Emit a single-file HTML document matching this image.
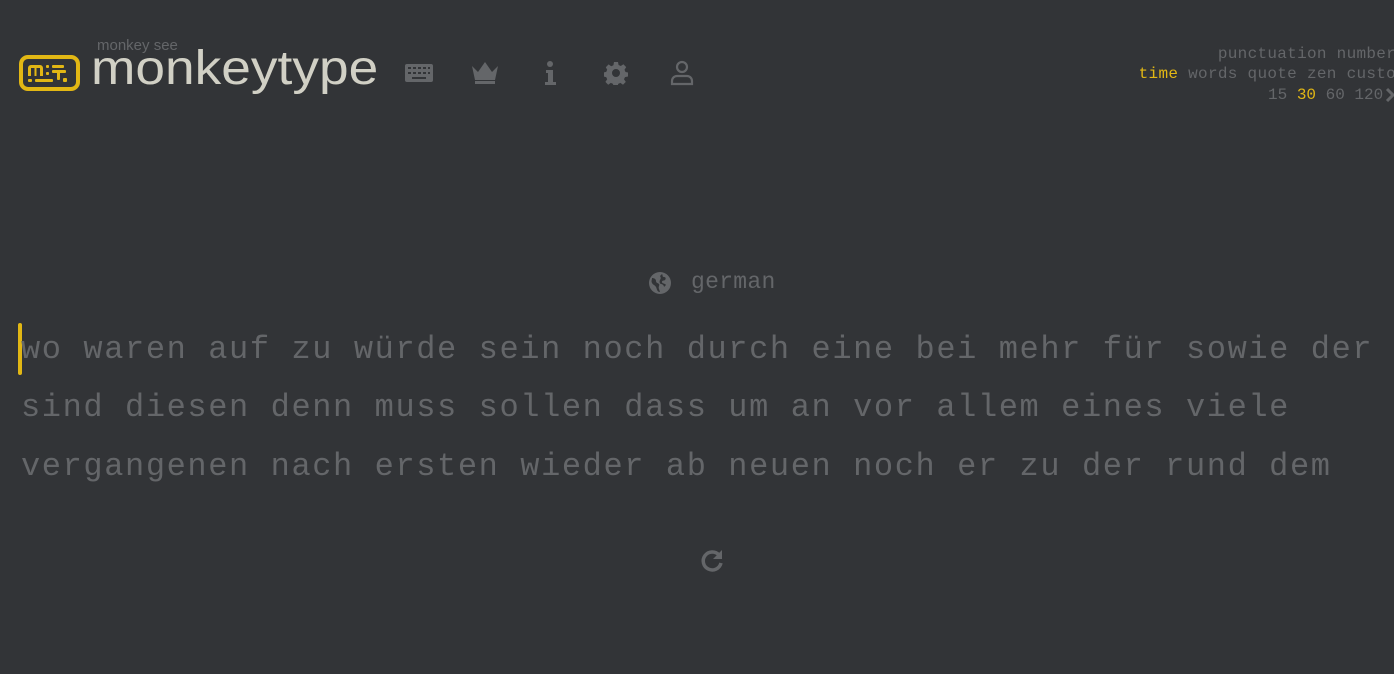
<!DOCTYPE html>
<html><head><meta charset="utf-8"><style>
html,body{margin:0;padding:0;background:#323437;width:1394px;height:674px;overflow:hidden;position:relative}
.mono{font-family:"Liberation Mono",monospace}
.abs{position:absolute;white-space:nowrap}
.words{left:21px;font-size:32px;letter-spacing:1.6px;color:#646669;line-height:58px}
.tr{right:-12px;font-size:16px;color:#646669;text-align:right;line-height:20px;letter-spacing:0.3px}
.y{color:#e2b714}
</style></head><body>
<svg class="abs" style="left:19px;top:55px" width="61" height="36" viewBox="0 0 61 36">
<rect x="2" y="2" width="57" height="32" rx="7" fill="none" stroke="#e2b714" stroke-width="4"/>
<g fill="#e2b714">
<path d="M9 21V13a3 3 0 0 1 3-3h9a3 3 0 0 1 3 3v8h-3v-8h-3.5v8h-2v-8H12v8z"/>
<rect x="27" y="10" width="3" height="3" rx="1"/><rect x="27" y="17" width="3" height="3" rx="1"/>
<rect x="33" y="10" width="12" height="3" rx="1"/><rect x="33" y="15" width="14" height="3" rx="1"/>
<rect x="38" y="15" width="3" height="10" rx="1"/>
<rect x="9" y="24" width="4" height="3" rx="1"/><rect x="16" y="24" width="18" height="3" rx="1"/>
<rect x="44" y="23" width="4" height="4" rx="1"/>
</g></svg>
<div class="abs" style="left:97px;top:37px;font-family:'Liberation Sans',sans-serif;font-size:15px;color:#646669">monkey see</div>
<div class="abs" style="left:91px;top:41px;font-family:'Liberation Sans',sans-serif;font-size:48px;color:#d1d0c5;transform-origin:0 0;transform:scaleX(1.11)">monkeytype</div>
<svg class="abs" style="left:405px;top:62px" width="28" height="22" viewBox="0 0 28 22"><rect x="0" y="2" width="28" height="18" rx="2" fill="#646669"/><g fill="#323437"><rect x="3" y="5" width="3" height="2"/><rect x="8" y="5" width="3" height="2"/><rect x="13" y="5" width="3" height="2"/><rect x="18" y="5" width="3" height="2"/><rect x="23" y="5" width="2" height="2"/><rect x="3" y="10" width="3" height="2"/><rect x="8" y="10" width="3" height="2"/><rect x="13" y="10" width="3" height="2"/><rect x="18" y="10" width="3" height="2"/><rect x="23" y="10" width="2" height="2"/><rect x="7" y="15" width="14" height="2"/></g></svg>
<svg class="abs" style="left:470px;top:60px" width="30" height="26" viewBox="0 0 30 26"><path d="M2 6l6 6 7-10 7 10 6-6-3 14H5z" fill="#646669"/><rect x="5" y="21" width="20" height="3" fill="#646669"/></svg>
<svg class="abs" style="left:543px;top:60px" width="14" height="26" viewBox="0 0 14 26"><circle cx="7" cy="4" r="3" fill="#646669"/><path d="M3 10h7v12h3v3H2v-3h3v-9H3z" fill="#646669"/></svg>
<svg class="abs" style="left:604px;top:61px" width="24" height="24" viewBox="0 0 24 24"><path fill="#646669" d="M10 1h4l.6 3 2.2 1 2.6-1.7 2.8 2.8L20.5 8.7l1 2.3 2.5.5v4l-3 .6-1 2.2 1.8 2.6-2.8 2.8-2.6-1.8-2.2 1-.6 3h-4l-.6-3-2.2-1-2.6 1.8-2.8-2.8 1.8-2.6-1-2.2-3-.6v-4l3-.6 1-2.2L1.8 6.2 4.6 3.4 7.2 5.2l2.2-1zM12 8a4 4 0 1 0 0 8 4 4 0 0 0 0-8z"/></svg>
<svg class="abs" style="left:670px;top:60px" width="24" height="26" viewBox="0 0 24 26"><circle cx="12" cy="7" r="5" fill="none" stroke="#646669" stroke-width="2.2"/><path d="M2 24v-3a5 5 0 0 1 5-5h10a5 5 0 0 1 5 5v3z" fill="none" stroke="#646669" stroke-width="2.2"/></svg>
<div class="abs mono tr" style="top:44px">punctuation numbers</div>
<div class="abs mono tr" style="top:64px"><span class="y">time</span> words quote zen custom</div>
<div class="abs mono" style="left:1268px;top:85px;font-size:16px;color:#646669;line-height:20px">15 <span class="y">30</span> 60 120 </div>
<svg class="abs" style="left:1385px;top:86px" width="12" height="18" viewBox="0 0 12 18"><path d="M2 3l6 6-6 6" stroke="#646669" stroke-width="3" fill="none"/></svg>
<svg class="abs" style="left:648px;top:271px" width="24" height="24" viewBox="0 0 24 24"><circle cx="12" cy="12" r="11" fill="#646669"/><path fill="#323437" d="M4 7c2 0 4 1 4 3s2 2 3 3-1 3 0 5l1 3c-3 0-3-3-4-5s-3-2-4-4 0-3 0-5zM14 3c1 1 0 3 2 3s2 2 1 3-3 0-3 2 3 1 4 3l-2 2c0-2-2-3-3-3s-2-2-1-4 1-2 0-4z"/></svg>
<div class="abs mono" style="left:691px;top:269px;font-size:23px;color:#646669;letter-spacing:0.3px">german</div>
<div class="abs" style="left:18px;top:323px;width:4px;height:52px;background:#e2b714;border-radius:2px"></div>
<div class="abs mono words" style="top:321px">wo waren auf zu würde sein noch durch eine bei mehr für sowie der</div>
<div class="abs mono words" style="top:379px">sind diesen denn muss sollen dass um an vor allem eines viele</div>
<div class="abs mono words" style="top:438px">vergangenen nach ersten wieder ab neuen noch er zu der rund dem</div>
<svg class="abs" style="left:700px;top:549px" width="26" height="24" viewBox="0 0 26 24"><path d="M19 6a9 9 0 1 0 2 8" stroke="#646669" stroke-width="3.5" fill="none"/><path d="M22 1v9h-9z" fill="#646669"/></svg>
</body></html>
